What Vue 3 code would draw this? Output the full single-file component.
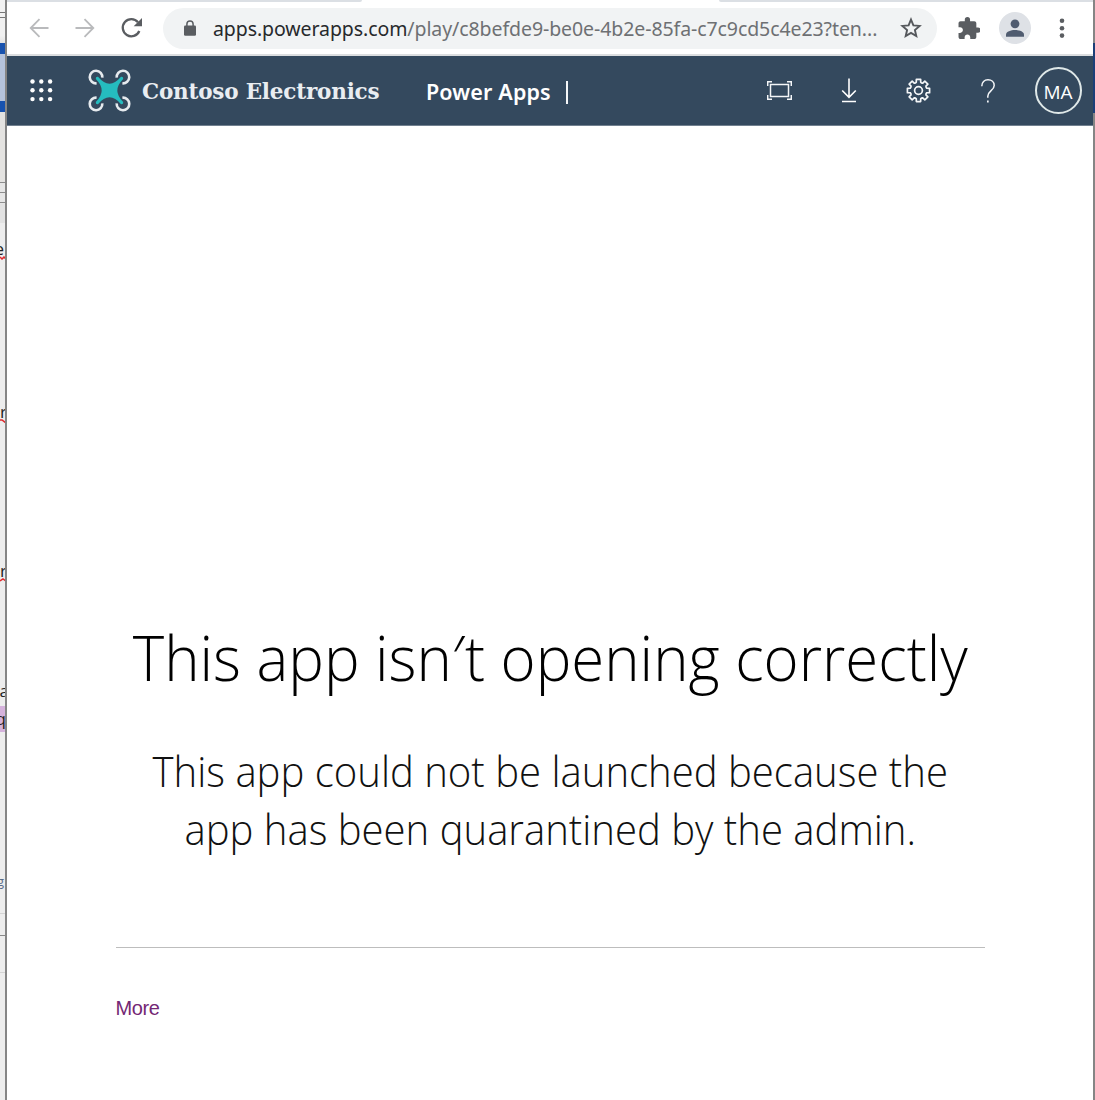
<script setup>
const dots = [0, 1, 2].flatMap((r) => [0, 1, 2].map((c) => ({ x: 2.5 + c * 8.8, y: 2.5 + r * 8.8 })))

const rotors = [
  { x: 8, y: 8, a: 0 },
  { x: 35, y: 8, a: 90 },
  { x: 35, y: 35, a: 180 },
  { x: 8, y: 35, a: 270 },
]

// Toothed outline of the settings cog, centred on 12.5,12.5
const teeth = 8
const cog = Array.from({ length: teeth }, (_, i) => {
  const p = (r, deg) => {
    const t = ((i * 360) / teeth + deg) * (Math.PI / 180)
    return `${(12.5 + r * Math.sin(t)).toFixed(2)} ${(12.5 - r * Math.cos(t)).toFixed(2)}`
  }
  return `${i ? 'L' : 'M'}${p(8.6, -15)}L${p(11.3, -11)}L${p(11.3, 11)}L${p(8.6, 15)}Q${p(7.9, 22.5)} ${p(8.6, 30)}`
}).join('') + 'Z'
</script>

<template>
  <div class="desktop">
    <aside class="behind">
      <div class="seg s1"></div>
      <div class="seg s2"></div>
      <div class="seg s3"></div>
      <div class="seg blue"></div>
      <div class="seg pale"></div>
      <div class="seg blue"></div>
      <div class="seg s4"></div>
      <div class="seg ruled"></div>
      <div class="seg s5"></div>
      <div class="seg doc">
        <span class="bit b1">e</span>
        <svg class="squig q1" width="6" height="4"><path d="M0 1l2 2 2-2 2 2" /></svg>
        <span class="bit b2">r</span>
        <svg class="squig q2" width="6" height="4"><path d="M0 1h2l4 3" /></svg>
        <span class="bit b3">r</span>
        <svg class="squig q3" width="6" height="4"><path d="M0 3l3-2 3 2" /></svg>
        <span class="mark"></span>
        <span class="bit b4">a</span>
        <span class="bit b5">q</span>
        <span class="bit b6">g</span>
        <i class="rule r1"></i><i class="rule r2"></i><i class="rule r3"></i>
      </div>
    </aside>

    <main class="window">
      <div class="tabs"><i class="tab-l"></i><i class="tab-gap"></i><i class="tab-r"></i></div>
      <div class="toolbar">
        <svg class="back" width="20" height="20" viewBox="0 0 20 20"><path class="nav-arrow" d="M19.5 10H2M10.5 1.200L1.700 10l8.800 8.800" /></svg>
        <svg class="fwd" width="20" height="20" viewBox="0 0 20 20"><path class="nav-arrow" d="M.5 10H18M9.500 1.200L18.300 10l-8.800 8.800" /></svg>
        <svg class="reload" width="22" height="22" viewBox="0 0 22 22">
          <path d="M18.300 14A8.600 8.600 0 1 1 17 5.200" fill="none" stroke="#5a5d61" stroke-width="2.300" />
          <path d="M21 1v8.300h-8.300z" fill="#5a5d61" />
        </svg>
        <div class="omnibox">
          <svg class="lock" width="12" height="16" viewBox="0 0 12 16">
            <rect x="0" y="5.500" width="12" height="10.200" rx="1.300" fill="#5a5d61" />
            <path d="M2.900 6V4a3.100 3.100 0 0 1 6.200 0v2" fill="none" stroke="#5a5d61" stroke-width="1.500" />
          </svg>
          <span class="url"><b>apps.powerapps.com</b>/play/c8befde9-be0e-4b2e-85fa-c7c9cd5c4e23?ten...</span>
          <svg class="star" width="22" height="22" viewBox="0 0 22 22">
            <path d="M11 2.600l2.400 5.800 6.200.5-4.700 4.100 1.400 6.100-5.300-3.200-5.300 3.200 1.400-6.100-4.700-4.100 6.200-.5z" fill="none" stroke="#55585c" stroke-width="1.900" />
          </svg>
        </div>
        <svg class="puzzle" width="22" height="22" viewBox="1.500 1 21 21">
          <path fill="#5a5d61" d="M20.500 11H19V7c0-1.100-.9-2-2-2h-4V3.500a2.500 2.500 0 0 0-5 0V5H4c-1.100 0-2 .9-2 2v3.800h1.500c1.500 0 2.700 1.200 2.700 2.700S5 16.200 3.500 16.200H2V20c0 1.100.9 2 2 2h3.800v-1.500c0-1.500 1.200-2.700 2.700-2.700s2.700 1.200 2.700 2.700V22H17c1.100 0 2-.9 2-2v-4h1.500a2.500 2.500 0 0 0 0-5z" />
        </svg>
        <svg class="profile" width="32" height="32" viewBox="0 0 32 32">
          <circle cx="16" cy="16" r="16" fill="#dee1e6" />
          <circle cx="16" cy="11.800" r="4.400" fill="#505c70" />
          <path d="M7 24.700v-2.200c0-3 5-4.600 9-4.600s9 1.600 9 4.600v2.200z" fill="#505c70" />
        </svg>
        <svg class="kebab" width="6" height="20" viewBox="0 0 6 20" fill="#5a5d61">
          <circle cx="3" cy="2.800" r="2.300" /><circle cx="3" cy="10.200" r="2.300" /><circle cx="3" cy="17.600" r="2.300" />
        </svg>
      </div>

      <header class="suite">
        <svg class="waffle" width="23" height="23" viewBox="0 0 23 23">
          <circle v-for="(d, i) in dots" :key="i" :cx="d.x" :cy="d.y" r="2.200" fill="#fff" />
        </svg>
        <svg class="drone" width="43" height="43" viewBox="0 0 43 43">
          <path v-for="r in rotors" :key="r.a" :transform="`translate(${r.x} ${r.y}) rotate(${r.a})`" d="M.6 6.300A6.300 6.300 0 1 1 6.300 .6" fill="none" stroke="#e6eaee" stroke-width="2.600" />
          <path d="M10 7.800Q21.500 21.500 33 7.800Q35.500 7.500 35.200 10Q23.500 21.500 35.200 33Q35.500 35.500 33 35.200Q21.500 21.500 10 35.200Q7.500 35.500 7.800 33Q19.500 21.500 7.800 10Q7.500 7.500 10 7.800z" fill="#25bcbf" />
        </svg>
        <span class="brand">Contoso Electronics</span>
        <span class="product">Power Apps</span>
        <i class="bar"></i>
        <svg class="fit" width="25" height="19" viewBox="0 0 25 19" fill="none" stroke="#f4f6f8" stroke-width="1.500">
          <rect x="3.500" y="3.500" width="18" height="12" />
          <path d="M.7 5V.7H5M20 .7h4.300V5M24.300 14v4.300H20M5 18.300H.7V14" />
        </svg>
        <svg class="down" width="16" height="25" viewBox="0 0 16 25" fill="none" stroke="#fff" stroke-width="1.600">
          <path d="M8 .5v19M1.200 12.500L8 19.300l6.800-6.800M1 23.500h14" />
        </svg>
        <svg class="gear" width="25" height="25" viewBox="0 0 25 25" fill="none" stroke="#f4f6f8" stroke-width="1.700" stroke-linejoin="round">
          <path :d="cog" /><circle cx="12.500" cy="12.500" r="3.900" />
        </svg>
        <svg class="help" width="14" height="24" viewBox="0 0 14 24">
          <path d="M.8 7.200C.8 3 3.400.8 7 .8s6.200 2.200 6.200 5.600c0 5-6.400 5.400-6.400 10.800v1.600" fill="none" stroke="#f4f6f8" stroke-width="1.500" />
          <rect x="6" y="21.500" width="1.700" height="2" fill="#f4f6f8" />
        </svg>
        <span class="avatar">MA</span>
      </header>

      <section class="content">
        <h1>This app isn<em>′</em>t opening correctly</h1>
        <p>This app could not be launched because the<br />app has been quarantined by the admin.</p>
        <hr />
        <a class="more">More</a>
      </section>
    </main>
    <aside class="edge"><i class="e1"></i><i class="e2"></i><i class="e3"></i></aside>
  </div>
</template>

<style>
body { margin: 0; overflow: hidden; }
</style>

<style scoped>
.desktop { display: flex; width: 1095px; height: 1100px; overflow: hidden; background: #fff; font-family: "Open Sans", sans-serif; }
svg { display: block; flex: none; }
.behind { width: 5px; flex: none; display: flex; flex-direction: column; border-right: 2px solid #858585; overflow: hidden; }
.seg { flex: none; box-sizing: border-box; }
.s1 { height: 13px; background: #f2f2f2; border-bottom: 1px solid #777; }
.s2 { height: 5px; background: #f2f2f2; border-bottom: 1px solid #777; }
.s3 { height: 25px; background: linear-gradient(#f0f0f0 70%, #e2e2e2); }
.blue { height: 11px; background: #1852ae; }
.pale { height: 47px; background: #b5c3dc; }
.s4 { height: 70px; background: #e4e3e1; }
.ruled { height: 22px; background: repeating-linear-gradient(#8c8c8c 0 1px, #e6e6e6 1px 10px); }
.s5 { height: 19px; background: #e2e2e2; }
.doc { height: 877px; background: #ededed; position: relative; }
.bit { position: absolute; font-size: 17px; line-height: 20px; color: #222; right: 1px; }
.b1 { top: 16px; }
.b2 { top: 179px; right: -2px; }
.b3 { top: 338px; right: -2px; }
.b4 { top: 458px; right: -4px; }
.b5 { top: 486px; right: -1px; }
.b6 { top: 648px; right: 1px; font-size: 13px; color: #5a6c88; }
.mark { position: absolute; left: 0; top: 483px; width: 5px; height: 26px; background: #d5b2dc; }
.squig { position: absolute; left: 0; fill: none; stroke: #e0282c; stroke-width: 1.5; }
.q1 { top: 33px; } .q2 { top: 196px; } .q3 { top: 355px; }
.rule { position: absolute; left: 0; width: 5px; height: 1px; background: #d4d4d4; }
.r1 { top: 690px; } .r2 { top: 712px; background: #888; } .r3 { top: 749px; }

.window { flex: 1; min-width: 0; display: flex; flex-direction: column; }
.tabs { display: flex; height: 2px; flex: none; }
.tab-l { width: 355px; background: #dbdfe4; border-radius: 0 0 4px 0; }
.tab-gap { width: 357px; }
.tab-r { flex: 1; background: #dbdfe4; border-radius: 0 0 0 4px; }
.toolbar { height: 52px; flex: none; display: flex; align-items: center; border-bottom: 2px solid #dcdee0; }
.nav-arrow { fill: none; stroke: #b9babc; stroke-width: 1.8; }
.back { margin-left: 21.500px; }
.fwd { margin-left: 26.500px; }
.reload { margin-left: 26px; }
.omnibox { margin-left: 20px; box-sizing: border-box; width: 774px; height: 41px; border-radius: 21px; background: #f1f3f4; display: flex; align-items: center; }
.lock { margin-left: 20.500px; }
.url { margin-left: 17.500px; width: 667px; font-family: "Noto Sans", sans-serif; font-size: 19.500px; letter-spacing: -.08px; color: #6e7073; white-space: nowrap; }
.url b { font-weight: 400; color: #27292c; }
.star { margin-left: 19.500px; }
.puzzle { margin-left: 20.500px; }
.profile { margin-left: 19.500px; }
.kebab { margin-left: 27.500px; }

.suite { height: 70px; box-sizing: border-box; flex: none; display: flex; align-items: center; background: #34495e; color: #fff; border-bottom: 1px solid #71808f; }
.waffle { margin-left: 22.500px; }
.drone { margin-left: 35px; }
.brand { margin-left: 11.500px; padding-top: 1px; width: 238px; font-family: "DejaVu Serif", serif; font-weight: 700; font-size: 21.500px; white-space: nowrap; color: #e9edf1; letter-spacing: -.2px; }
.product { margin-left: 46px; padding-top: 1px; width: 126px; font-family: "Noto Sans", sans-serif; font-weight: 600; font-size: 21.500px; letter-spacing: .15px; white-space: nowrap; }
.bar { width: 2px; height: 23px; margin: 4px 0 0 14px; background: #f4f6f8; }
.fit { margin-left: 198.500px; }
.down { margin-left: 49px; }
.gear { margin-left: 49.500px; }
.help { margin-left: 50px; }
.avatar { margin-left: 39.500px; width: 47px; height: 47px; box-sizing: border-box; border: 2px solid #dfe8e8; border-radius: 50%; display: flex; align-items: center; justify-content: center; font-size: 19px; padding-top: 2px; }

.content { flex: 1; padding: 488px 109px 0 108.500px; display: flex; flex-direction: column; color: #000; }
h1 { margin: 0; height: 86px; line-height: 86px; font-size: 63.500px; font-weight: 300; white-space: nowrap; display: flex; justify-content: center; transform: scaleX(.943); }
h1 em { font-style: normal; }
p { margin: 42px 0 0; font-size: 42px; line-height: 58px; font-weight: 300; text-align: center; white-space: nowrap; color: #111; transform: scaleX(.954); }
hr { width: 869px; margin: 89px 0 0; border: 0; height: 1px; background: #bdbdbd; }
.more { margin-top: 48px; font: 20px/24px "Liberation Sans", sans-serif; letter-spacing: -.4px; color: #742774; }
.edge { width: 2px; flex: none; display: flex; flex-direction: column; }
.e1 { height: 43px; background: #858585; }
.e2 { height: 70px; background: #1c3f78; }
.e3 { flex: 1; background: #858585; }
</style>
